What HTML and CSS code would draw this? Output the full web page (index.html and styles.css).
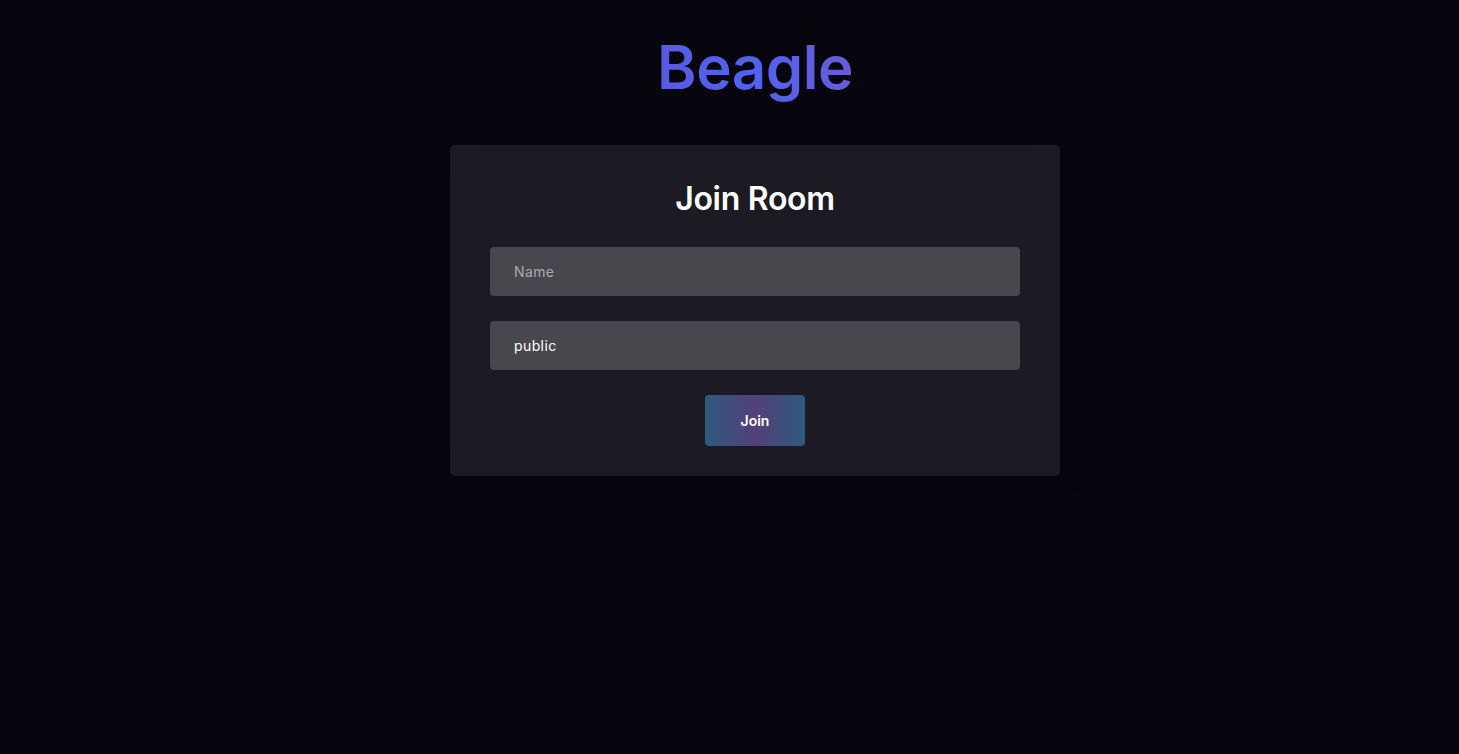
FILE: index.html
```html
<!DOCTYPE html>
<html lang="en">
<head>
<meta charset="utf-8">
<title>Beagle</title>
<link rel="stylesheet" href="styles.css">
</head>
<body>
<main class="page">
  <h1 class="logo">Beagle</h1>
  <section class="card">
    <h2 class="card-title">Join Room</h2>
    <form class="form">
      <input class="field" type="text" placeholder="Name">
      <input class="field" type="text" value="public">
      <button class="join" type="button">Join</button>
    </form>
  </section>
</main>
</body>
</html>
```
FILE: styles.css
```css
html, body {
  margin: 0;
  padding: 0;
  background: #07060f;
  height: 100%;
}
body {
  font-family: Inter, "Noto Sans", sans-serif;
  color: #ffffff;
}
.page {
  display: flex;
  flex-direction: column;
  align-items: center;
  padding-left: 51px;
  padding-top: 28px;
}
.logo {
  margin: 0;
  font-size: 60px;
  line-height: 78px;
  font-weight: 600;
  letter-spacing: -0.5px;
  background: linear-gradient(90deg, #5a5ae0 0%, #4f62ee 50%, #6a5bd8 100%);
  -webkit-background-clip: text;
  background-clip: text;
  color: transparent;
}
.card {
  margin-top: 39px;
  width: 610px;
  box-sizing: border-box;
  padding: 34px 40px 30px;
  background: #1c1a23;
  border-radius: 5px;
  box-shadow: 0 0 24px rgba(0, 0, 0, 0.35);
}
.card-title {
  margin: 0 0 28px;
  text-align: center;
  font-size: 32px;
  line-height: 40px;
  font-weight: 600;
  letter-spacing: -0.3px;
}
.form {
  display: flex;
  flex-direction: column;
  align-items: center;
  gap: 25px;
}
.field {
  width: 100%;
  height: 49px;
  box-sizing: border-box;
  border: none;
  border-radius: 4px;
  background: #48474d;
  padding: 0 24px;
  font-family: inherit;
  font-size: 14px;
  letter-spacing: 0.4px;
  color: #ffffff;
  outline: none;
}
.field::placeholder {
  color: #aaa9af;
}
.join {
  width: 100px;
  height: 51px;
  border: none;
  border-radius: 4px;
  background: linear-gradient(90deg, #2d5b7b 0%, #553f7a 50%, #2d5b7b 100%);
  color: #ffffff;
  font-family: inherit;
  font-size: 14px;
  font-weight: 600;
  cursor: pointer;
}
```
